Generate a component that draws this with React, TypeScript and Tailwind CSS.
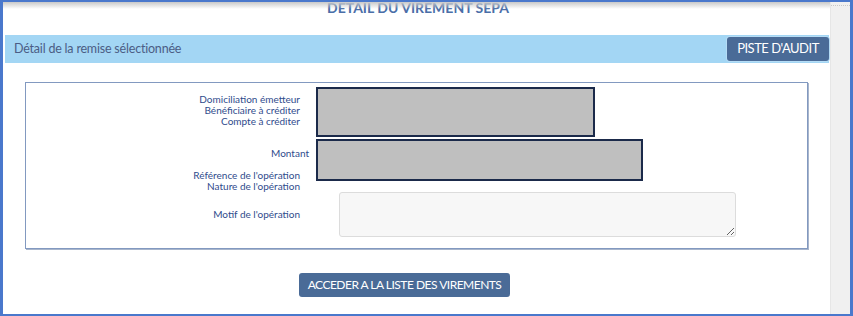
import React from "react";

// Détail d'un virement SEPA (capture partielle, barre de défilement à droite)
const labelCls = "text-[10px] leading-[11px] text-[#2f4b8c] text-right";

export default function App() {
  return (
    <div className="w-[853px] h-[316px] flex overflow-hidden bg-white border-[#4a78cc] border-l-[3px] border-r-[3px] border-t-2 border-b-2 font-['Lato','Open_Sans',sans-serif]">
      <div className="relative flex-1 flex flex-col overflow-hidden">
        {/* ombre du haut */}
        <div className="absolute top-0 left-0 right-0 h-[7px] bg-gradient-to-b from-[#c9c9c9] to-transparent" />

        <div className="h-[33px] pl-[3px] flex justify-center">
          <h1 className="mt-[-1px] text-[14px] leading-[14px] font-bold text-[#4a6ea8]">DETAIL DU VIREMENT SEPA</h1>
        </div>

        <div className="ml-[2px] mr-[1px] h-[28px] bg-[#a3d6f4] flex items-center justify-between">
          <span className="pl-[9px] text-[12.5px] tracking-[-0.2px] text-[#4b5d85]">Détail de la remise sélectionnée</span>
          <button className="h-[24px] w-[102px] rounded-[3px] bg-[#4a6b97] ring-1 ring-[#b5dcf5] text-[13px] tracking-[-0.5px] text-white">
            PISTE D'AUDIT
          </button>
        </div>

        <div className="mt-[19px] mx-[22px] border border-[#8299c0] shadow-[1px_1px_0_#a9b6cc] flex">
          <div className="w-[283px] flex flex-col pt-[11px]">
            <div className={`${labelCls} mr-[9px]`}>Domiciliation émetteur</div>
            <div className={`${labelCls} mr-[9px]`}>Bénéficiaire à créditer</div>
            <div className={`${labelCls} mr-[9px]`}>Compte à créditer</div>
            <div className={`${labelCls} mt-[21px]`}>Montant</div>
            <div className={`${labelCls} mr-[9px] mt-[11px]`}>Référence de l'opération</div>
            <div className={`${labelCls} mr-[9px]`}>Nature de l'opération</div>
            <div className={`${labelCls} mr-[9px] mt-[17px]`}>Motif de l'opération</div>
          </div>

          <div className="ml-[7px] flex flex-col items-start">
            <div className="mt-[4px] w-[279px] h-[50px] bg-[#bfbfbf] border-2 border-[#1b2a4a]" />
            <div className="mt-[2px] w-[327px] h-[42px] bg-[#bfbfbf] border-2 border-[#1b2a4a]" />
            <textarea
              readOnly
              className="mt-[11px] mb-[11px] ml-[23px] w-[397px] h-[45px] bg-[#f7f7f7] border border-[#dcdcdc] rounded-[3px] outline-none"
            />
          </div>
        </div>

        <div className="mt-[22px] ml-[296px]">
          <button className="h-[24px] w-[211px] rounded-[3px] bg-[#4a6b97] text-[12px] text-white tracking-[-0.5px]">
            ACCEDER A LA LISTE DES VIREMENTS
          </button>
        </div>
      </div>

      {/* barre de défilement */}
      <div className="w-[20px] bg-[#f0f0f0] border-l border-[#e6e6e6]">
        <div className="mt-[3px] border-t border-dotted border-[#c8c8c8]" />
      </div>
    </div>
  );
}
